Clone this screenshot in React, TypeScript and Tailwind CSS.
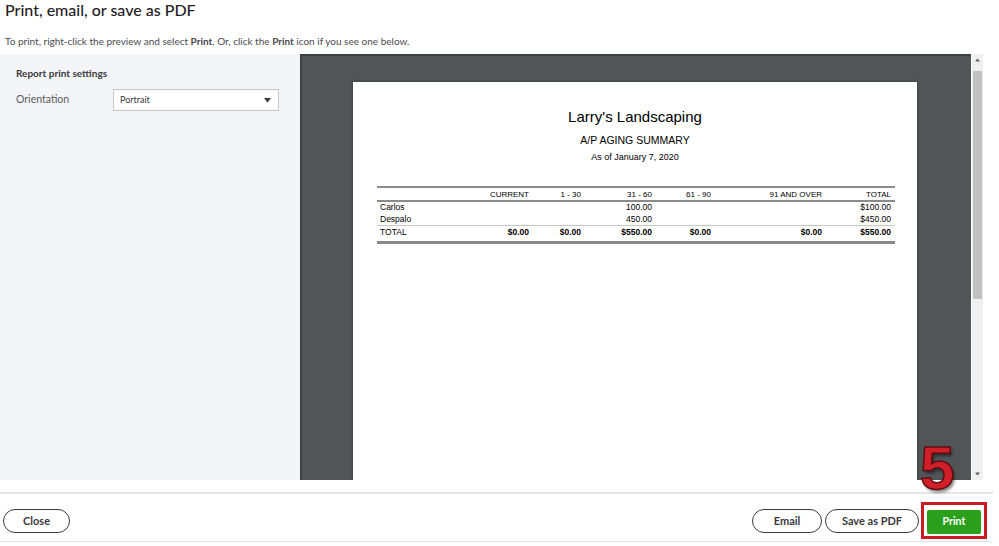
import React from "react";

const rows = [
  { name: "Carlos", c31: "100.00", total: "$100.00", h: "h-[11px]" },
  { name: "Despalo", c31: "450.00", total: "$450.00", h: "h-[12px]" },
];

const cols = "grid grid-cols-[80px_76px_52px_71px_59px_111px_69px] items-center";

const ReportPage = () => (
  <div className="ml-[51px] mt-[26px] w-[564px] h-[520px] bg-white shadow-[0_0_3px_rgba(0,0,0,0.4)] font-['Liberation_Sans',Arial,sans-serif] text-black">
    <div className="pt-[26px] text-center text-[15px] leading-[18px]">Larry's Landscaping</div>
    <div className="mt-[8px] text-center text-[10.5px] leading-[12px]">A/P AGING SUMMARY</div>
    <div className="mt-[6px] text-center text-[9px] leading-[11px]">As of January 7, 2020</div>

    <div className="ml-[24px] mt-[23px] w-[518px] text-[8.5px] leading-[11px]">
      <div className="h-[2px] bg-[#8a8a8a]" />
      <div className={cols + " h-[12px] text-[8px]"}>
        <div />
        <div className="text-right pr-[4px]">CURRENT</div>
        <div className="text-right pr-[4px]">1 - 30</div>
        <div className="text-right pr-[4px]">31 - 60</div>
        <div className="text-right pr-[4px]">61 - 90</div>
        <div className="text-right pr-[4px]">91 AND OVER</div>
        <div className="text-right pr-[4px]">TOTAL</div>
      </div>
      <div className="h-[2px] bg-[#8a8a8a]" />
      {rows.map((r) => (
        <div key={r.name} className={cols + " " + r.h}>
          <div className="pl-[3px]">{r.name}</div>
          <div />
          <div />
          <div className="text-right pr-[4px]">{r.c31}</div>
          <div />
          <div />
          <div className="text-right pr-[4px]">{r.total}</div>
        </div>
      ))}
      <div className="h-px bg-[#c8c8c8]" />
      <div className={cols + " h-[12px] font-bold"}>
        <div className="pl-[3px] font-normal">TOTAL</div>
        <div className="text-right pr-[4px]">$0.00</div>
        <div className="text-right pr-[4px]">$0.00</div>
        <div className="text-right pr-[4px]">$550.00</div>
        <div className="text-right pr-[4px]">$0.00</div>
        <div className="text-right pr-[4px]">$0.00</div>
        <div className="text-right pr-[4px]">$550.00</div>
      </div>
      <div className="mt-[3px] h-[3px] bg-[#8a8a8a]" />
    </div>
  </div>
);

const Scrollbar = () => (
  <div className="w-[11px] ml-px bg-[#f0f0f0] flex flex-col items-center">
    <svg width="7" height="6" viewBox="0 0 7 6" className="mt-[3px]">
      <path d="M1 4.5 L3.5 1.5 L6 4.5 Z" fill="#606060" />
    </svg>
    <div className="mt-[8px] w-[9px] h-[228px] bg-[#c1c1c1]" />
    <div className="flex-1" />
    <svg width="7" height="6" viewBox="0 0 7 6" className="mb-[3px]">
      <path d="M1 1.5 L3.5 4.5 L6 1.5 Z" fill="#606060" />
    </svg>
  </div>
);

const OutlineButton = ({ label, w }: { label: string; w: string }) => (
  <button
    className={
      w +
      " mt-[15px] h-[24px] rounded-full border-[1.5px] border-[#393a3d] bg-white text-[11px] font-bold text-[#393a3d]"
    }
  >
    {label}
  </button>
);

export default function App() {
  return (
    <div className="relative w-[999px] h-[546px] bg-white overflow-hidden font-['Lato',sans-serif] text-[#393a3d]">
      <h1 className="pl-[5px] text-[16px] leading-[20px] font-medium text-[#1f2024]">
        Print, email, or save as PDF
      </h1>
      <p className="pl-[5px] mt-[15px] text-[10px] leading-[12px] text-[#4a4b4e]">
        To print, right-click the preview and select <b className="font-bold">Print</b>. Or, click the{" "}
        <b className="font-bold">Print</b> icon if you see one below.
      </p>

      <div className="mt-[7px] flex h-[426px]">
        <div className="w-[300px] bg-[#f4f5f8] pl-[16px] pt-[13px]">
          <div className="text-[10px] font-bold leading-[12px] text-[#393a3d]">Report print settings</div>
          <div className="mt-[10px] flex items-center">
            <span className="w-[97px] text-[10.5px] text-[#5a5b5e]">Orientation</span>
            <div className="w-[166px] h-[22px] bg-white border border-[#c7c8cb] flex items-center justify-between pl-[6px] pr-[7px]">
              <span className="text-[9px] text-[#393a3d]">Portrait</span>
              <svg width="7" height="5" viewBox="0 0 7 5">
                <path d="M0 0 L7 0 L3.5 4.5 Z" fill="#393a3d" />
              </svg>
            </div>
          </div>
        </div>
        <div className="w-[671px] bg-[#515558] overflow-hidden border-t-2 border-l-2 border-[#3e4144]">
          <ReportPage />
        </div>
        <Scrollbar />
      </div>

      <div className="mt-[12px] w-[993px] h-[2px] bg-[#e4e5e7]" />

      <div className="flex items-start h-[47px] pl-[3px] pr-[12px]">
        <OutlineButton label="Close" w="w-[67px]" />
        <div className="flex-1" />
        <OutlineButton label="Email" w="w-[70px]" />
        <div className="ml-[3px] flex">
          <OutlineButton label="Save as PDF" w="w-[94px]" />
        </div>
        <div className="ml-[2px] mt-[8px] border-[3px] border-[#cc1a22] px-[3px] py-[2px]">
          <button className="w-[54px] h-[24px] bg-[#2ca01c] text-white text-[10.5px] font-bold rounded-[2px]">
            Print
          </button>
        </div>
      </div>
      <div className="w-[993px] h-px bg-[#e4e5e7]" />

      <div className="absolute left-[920px] top-[437px] text-[62px] leading-[62px] font-bold font-['Liberation_Sans',Arial,sans-serif] text-[#cf1f28] [-webkit-text-stroke:1.5px_#5e0b0e] [text-shadow:2px_3px_3px_rgba(0,0,0,0.45)]">
        5
      </div>
    </div>
  );
}
